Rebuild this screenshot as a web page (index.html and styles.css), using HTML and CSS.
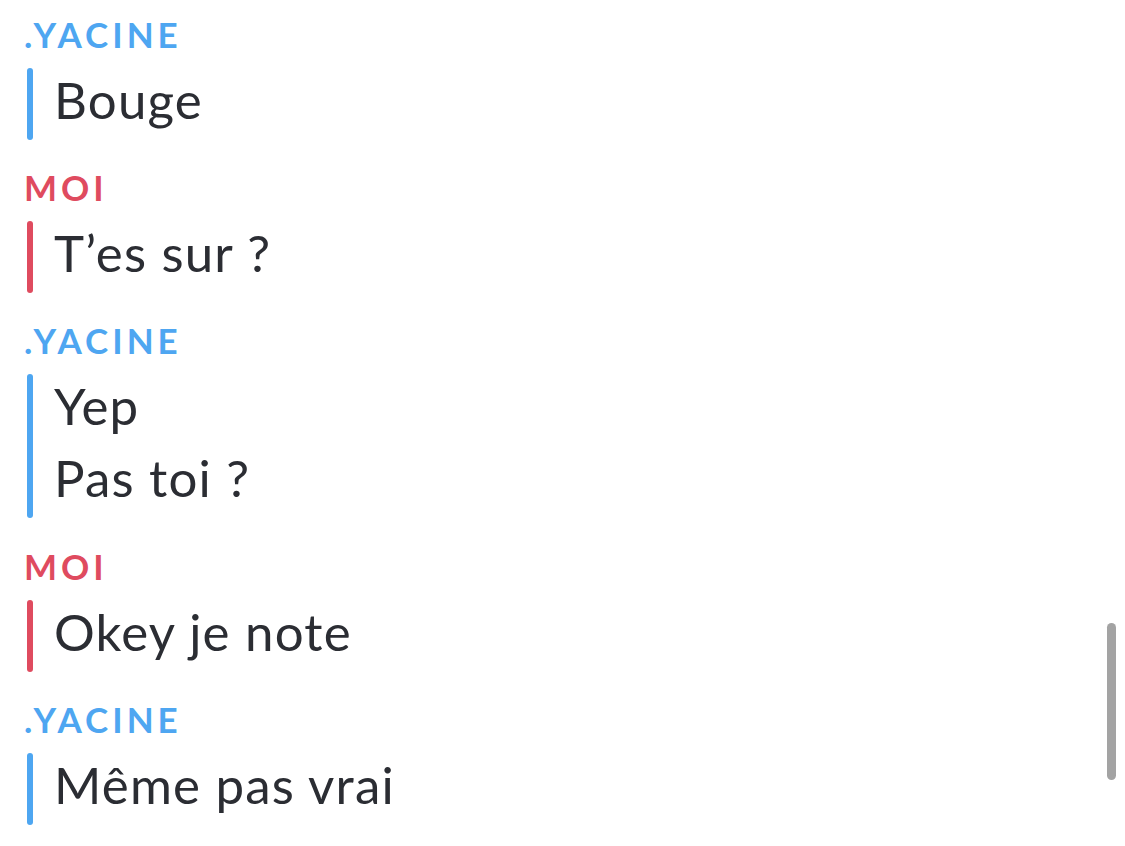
FILE: index.html
```html
<!DOCTYPE html>
<html lang="fr">
<head>
<meta charset="utf-8">
<title>Chat</title>
<link rel="stylesheet" href="styles.css">
</head>
<body>
<main class="chat">
  <section class="group them">
    <div class="sender">.YACINE</div>
    <div class="msgs"><span class="bar"></span><div class="lines"><p>Bouge</p></div></div>
  </section>
  <section class="group me">
    <div class="sender">MOI</div>
    <div class="msgs"><span class="bar"></span><div class="lines"><p>T’es sur ?</p></div></div>
  </section>
  <section class="group them">
    <div class="sender">.YACINE</div>
    <div class="msgs"><span class="bar"></span><div class="lines"><p>Yep</p><p>Pas toi ?</p></div></div>
  </section>
  <section class="group me">
    <div class="sender">MOI</div>
    <div class="msgs"><span class="bar"></span><div class="lines"><p>Okey je note</p></div></div>
  </section>
  <section class="group them">
    <div class="sender">.YACINE</div>
    <div class="msgs"><span class="bar"></span><div class="lines"><p>Même pas vrai</p></div></div>
  </section>
</main>
<div class="scrollbar"></div>
</body>
</html>
```
FILE: styles.css
```css
html, body {
  margin: 0;
  padding: 0;
  background: #ffffff;
}
body {
  width: 1125px;
  height: 846px;
  overflow: hidden;
  position: relative;
  font-family: Lato, "Noto Sans", sans-serif;
  color: #2b2d33;
}
.chat {
  padding: 14px 0 0 24px;
  display: flex;
  flex-direction: column;
}
.group {
  margin-bottom: 27px;
}
.group:nth-child(3) {
  margin-bottom: 28px;
}
.sender {
  font-size: 35px;
  line-height: 40px;
  font-weight: 700;
  letter-spacing: 4px;
}
.them .sender { color: #4ea6f1; }
.me .sender { color: #df4b5f; }
.msgs {
  display: flex;
  margin-top: 14px;
}
.bar {
  width: 6px;
  margin-left: 3px;
  border-radius: 3px;
  flex: none;
}
.them .bar { background: #4ea6f1; }
.me .bar { background: #df4b5f; }
.lines {
  margin-left: 21px;
  margin-top: -4px;
  margin-bottom: 4px;
}
.lines p {
  margin: 0;
  font-size: 51px;
  line-height: 72px;
  font-weight: 400;
  letter-spacing: 1.2px;
}
.scrollbar {
  position: absolute;
  left: 1107px;
  top: 623px;
  width: 9px;
  height: 157px;
  border-radius: 5px;
  background: #a3a3a3;
}
```
